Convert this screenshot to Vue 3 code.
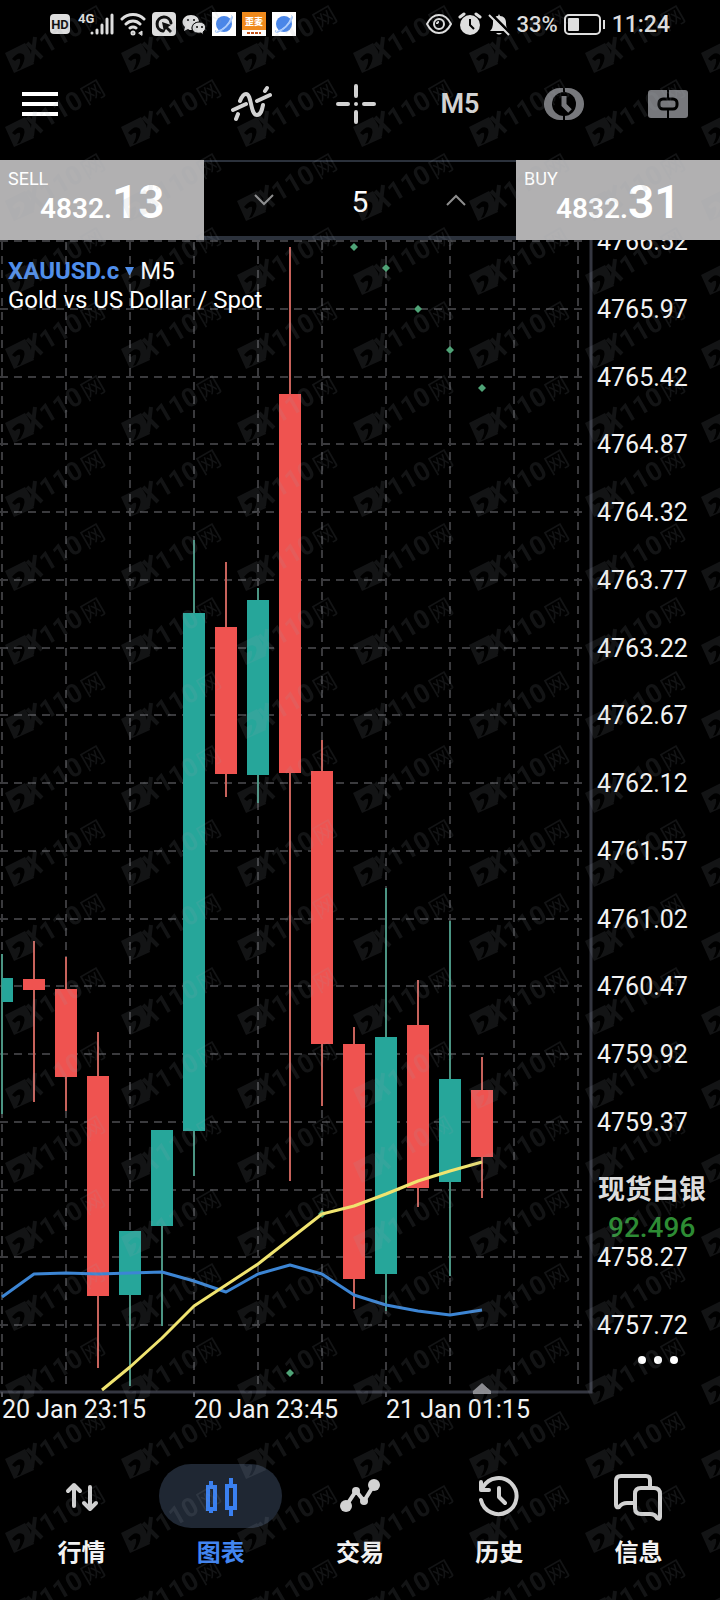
<script setup>
import { ref } from 'vue'

const volume = ref(5)
const active = ref('chart')

const tabs = [
  { id: 'quotes', label: '行情' },
  { id: 'chart', label: '图表' },
  { id: 'trade', label: '交易' },
  { id: 'history', label: '历史' },
  { id: 'messages', label: '信息' },
]

const gridX = Array.from({ length: 10 }, (_, i) => 2 + i * 64)
const gridY = Array.from({ length: 17 }, (_, i) => Math.round(241 + i * 67.75))
const prices = gridY
  .map((y, i) => ({ y, label: (4766.52 - i * 0.55).toFixed(2) }))
  .filter((_, i) => i !== 14)
const dates = [
  { x: 2, label: '20 Jan 23:15' },
  { x: 194, label: '20 Jan 23:45' },
  { x: 386, label: '21 Jan 01:15' },
]

// [centre x, high, body top, body bottom, low, rising]
const candles = [
  [2, 954, 978, 1002, 1114, true],
  [34, 941, 979, 990, 1102, false],
  [66, 957, 989, 1077, 1111, false],
  [98, 1032, 1076, 1296, 1368, false],
  [130, 1231, 1231, 1295, 1386, true],
  [162, 1130, 1130, 1226, 1326, true],
  [194, 540, 613, 1131, 1176, true],
  [226, 562, 627, 774, 797, false],
  [258, 588, 600, 775, 803, true],
  [290, 247, 394, 773, 1181, false],
  [322, 740, 771, 1044, 1106, false],
  [354, 1027, 1044, 1279, 1309, false],
  [386, 888, 1037, 1274, 1311, true],
  [418, 980, 1025, 1188, 1207, false],
  [450, 921, 1079, 1182, 1276, true],
  [482, 1057, 1090, 1157, 1198, false],
].map(([x, high, top, bottom, low, up]) => ({ x, high, top, bottom, low, up }))

const sar = [[354, 247], [386, 268], [418, 309], [450, 350], [482, 388], [322, 1214], [290, 1373]]
</script>

<template>
  <main class="app">
    <header class="status">
      <svg class="hd" width="20" height="20" viewBox="0 0 20 20">
        <rect width="20" height="20" rx="4" fill="#dedede" />
        <text x="10" y="15" text-anchor="middle" font-size="13" font-weight="700" fill="#111">HD</text>
      </svg>
      <span class="cell">
        <small>4G</small>
        <svg width="24" height="24" viewBox="0 0 24 24" stroke="#dedede" stroke-width="3" stroke-linecap="round">
          <path d="M2 21v0M7 21v-3M12 21v-8M17 21V7M22 21V3" />
        </svg>
      </span>
      <svg width="26" height="24" viewBox="0 0 26 24" fill="none" stroke="#dedede" stroke-width="3" stroke-linecap="round">
        <path d="M2 7C8 1 18 1 24 7M6 12C10 8 16 8 20 12M10 16q3-2 6 0" />
        <circle cx="13" cy="21" r="1" />
        <path d="M19 21l3-2v4z" stroke-width="1" fill="#dedede" />
      </svg>
      <svg width="24" height="24" viewBox="0 0 24 24">
        <rect width="24" height="24" rx="4" fill="#dedede" />
        <path d="M11 19a7 7 0 1 1 8-8" fill="none" stroke="#111" stroke-width="3" stroke-linecap="round" />
        <path d="M10 10l9 3-3 2 4 4-2 2-4-4-2 3z" fill="#111" />
      </svg>
      <svg width="24" height="24" viewBox="0 0 24 24">
        <path d="M9 3c5 0 8 3 8 7-5 0-8 3-7 8-2 0-3 0-4-1l-4 2 1-4c-5-4-2-12 6-12z" fill="#dedede" />
        <path d="M17 10c8 0 8 8 4 10l1 3-3-2c-6 1-9-2-9-5s3-6 7-6z" fill="#dedede" stroke="#000" stroke-width="1" />
        <g fill="#000"><circle cx="6" cy="8" r="1" /><circle cx="12" cy="8" r="1" /><circle cx="15" cy="15" r="1" /><circle cx="20" cy="15" r="1" /></g>
      </svg>
      <svg v-for="n in 3" :key="n" width="24" height="24" viewBox="0 0 24 24">
        <template v-if="n !== 2">
          <rect width="24" height="24" fill="#fff" />
          <circle cx="12" cy="12" r="8" fill="#4a86e8" />
          <path d="M5 20C11 18 17 13 20 5" fill="none" stroke="#b8d4ff" stroke-width="2" />
          <path d="M4 18C1 23 10 19 15 14s7-11 4-10" fill="none" stroke="#9fc2f7" stroke-width="1" />
        </template>
        <template v-else>
          <rect width="24" height="24" fill="#f08a1c" />
          <text x="12" y="13" text-anchor="middle" font-size="9" font-weight="900" fill="#fff">歪麦</text>
          <path d="M0 18h24v6H0z" fill="#fff" />
          <path d="M5 21h14" stroke="#c1541d" stroke-width="2" stroke-dasharray="3 1" />
        </template>
      </svg>
      <span class="spacer"></span>
      <svg width="26" height="24" viewBox="0 0 26 24" fill="none" stroke="#dedede" stroke-width="2">
        <path d="M1 12C7 0 19 0 25 12 19 24 7 24 1 12z" /><circle cx="13" cy="12" r="5" /><path d="M11 12q0-2 2-2" />
      </svg>
      <svg width="24" height="24" viewBox="0 0 24 24">
        <circle cx="12" cy="13" r="10" fill="#dedede" />
        <path d="M2 5l4-3M22 5l-4-3" stroke="#dedede" stroke-width="3" stroke-linecap="round" />
        <path d="M12 7v6l4 4" fill="none" stroke="#000" stroke-width="2" />
      </svg>
      <svg width="22" height="24" viewBox="0 0 22 24">
        <path d="M2 19q3-3 3-8c0-5 2-7 5-7l1-2 1 2c4 0 6 3 6 7s1 6 3 8zM8 21h6q-3 3-6 0" fill="#dedede" />
        <path d="M2 1l20 20" stroke="#000" stroke-width="3" /><path d="M1 3l20 20" stroke="#dedede" stroke-width="2" />
      </svg>
      <span class="pct">33%</span>
      <svg width="42" height="24" viewBox="0 0 42 24">
        <rect x="1" y="3" width="35" height="19" rx="4" fill="none" stroke="#dedede" stroke-width="2" />
        <rect x="4" y="6" width="11" height="13" rx="1" fill="#dedede" /><path d="M40 8v9" stroke="#dedede" stroke-width="2" />
      </svg>
      <time>11:24</time>
    </header>

    <nav class="toolbar" aria-label="图表工具">
      <button class="menu" aria-label="菜单">
        <svg width="36" height="26" viewBox="0 0 36 26"><path d="M0 3h36M0 13h36M0 23h36" stroke="#fff" stroke-width="4" /></svg>
      </button>
      <button aria-label="指标">
        <svg width="44" height="40" viewBox="0 0 44 40" fill="none" stroke="#d2d2d2" stroke-width="4" stroke-linecap="round" stroke-linejoin="round">
          <path d="M6 35L8 30M3 26L16 20M10 17C12 12 14 10 16 10C22 10 20 31 27 31C31 31 32 26 33 21M27 17L40 11M35 7L37 4" />
        </svg>
      </button>
      <button aria-label="十字光标">
        <svg width="40" height="40" viewBox="0 0 40 40" stroke="#d2d2d2" stroke-width="4" stroke-linecap="round">
          <path d="M2 20h10M28 20h10M20 2v10M20 28v10M20 20v0" />
        </svg>
      </button>
      <button class="period">M5</button>
      <button aria-label="时间">
        <svg width="40" height="34" viewBox="0 0 40 34">
          <rect y="1" width="40" height="32" rx="16" fill="#77787c" /><circle cx="20" cy="17" r="12" fill="#000" />
          <path d="M20 0v34" stroke="#000" stroke-width="2" /><path d="M20 9v9l6 6" fill="none" stroke="#77787c" stroke-width="5" />
        </svg>
      </button>
      <button aria-label="下单">
        <svg width="40" height="28" viewBox="0 0 40 28">
          <rect width="40" height="28" rx="3" fill="#77787c" /><path d="M20 0v28" stroke="#000" stroke-width="2" />
          <rect x="11" y="9" width="18" height="10" rx="4" fill="#77787c" stroke="#000" stroke-width="3" />
        </svg>
      </button>
    </nav>

    <section class="order-bar" aria-label="报价">
      <button class="quote"><span>SELL</span><b>4832.<i>13</i></b></button>
      <div class="volume">
        <button aria-label="减少" @click="volume = Math.max(1, volume - 1)">
          <svg width="20" height="12" viewBox="0 0 20 12"><path d="M1 1l9 9 9-9" fill="none" stroke="#8d8d8d" stroke-width="2" /></svg>
        </button>
        <input v-model.number="volume" aria-label="交易量" inputmode="numeric" />
        <button aria-label="增加" @click="volume++">
          <svg width="20" height="12" viewBox="0 0 20 12"><path d="M1 11l9-9 9 9" fill="none" stroke="#8d8d8d" stroke-width="2" /></svg>
        </button>
      </div>
      <button class="quote"><span>BUY</span><b>4832.<i>31</i></b></button>
    </section>

    <section class="chart" aria-label="XAUUSD.c M5">
      <svg class="plot" viewBox="0 240 720 1188">
        <g stroke="#3a3a3d" stroke-width="2" stroke-dasharray="8 6">
          <path v-for="x in gridX" :key="'x' + x" :d="`M${x} 242V1390`" />
          <path v-for="y in gridY" :key="'y' + y" :d="`M0 ${y}H588`" />
        </g>
        <path d="M0 1392H591V240" fill="none" stroke="#343640" stroke-width="3" />
        <path d="M2 1392v5M194 1392v5M386 1392v5" stroke="#505158" stroke-width="2" />
        <g v-for="c in candles" :key="c.x">
          <path :d="`M${c.x} ${c.high}V${c.low}`" :stroke="c.up ? '#4b9483' : '#c7625b'" stroke-width="2" />
          <rect :x="Math.max(2, c.x - 11)" :y="c.top" :width="c.x < 10 ? 11 : 22" :height="c.bottom - c.top" :fill="c.up ? '#26a69a' : '#ef5350'" />
        </g>
        <path v-for="p in sar" :key="p[0]" :d="`M${p[0]} ${p[1] - 4}l4 4-4 4-4-4z`" fill="#4fa377" />
        <g fill="none" stroke-width="3" stroke-linejoin="round">
          <path stroke="#3c85d4" d="M2 1297L34 1274L66 1273L98 1274L130 1273L162 1272L194 1281L226 1292L258 1274L290 1265L322 1274L354 1295L386 1305L418 1311L450 1315L482 1310" />
          <path stroke="#f0e470" d="M102 1390L130 1367L162 1338L194 1306L226 1285L258 1264L290 1239L322 1214L354 1206L386 1194L418 1181L450 1171L482 1162" />
        </g>
        <path d="M482 1383l9 8v3h-18v-3z" fill="#8b8b8f" />
        <g class="scale">
          <text v-for="p in prices" :key="p.label" x="597" :y="p.y + 9">{{ p.label }}</text>
          <text v-for="d in dates" :key="d.x" :x="d.x" y="1418">{{ d.label }}</text>
        </g>
      </svg>
      <div class="title">
        <p><a href="#">XAUUSD.c <svg width="9" height="8" viewBox="0 0 9 8"><path d="M0 0h9L5 8H4z" fill="#4f8eeb" /></svg></a> M5</p>
        <p>Gold vs US Dollar / Spot</p>
      </div>
      <aside class="ticker">
        <strong>现货白银</strong>
        <span>92.496</span>
      </aside>
      <button class="more" aria-label="更多"><i></i><i></i><i></i></button>
    </section>

    <nav class="tabs" aria-label="主导航">
      <button v-for="t in tabs" :key="t.id" :class="{ active: active === t.id }" @click="active = t.id">
        <span class="pill">
          <svg v-if="t.id === 'quotes'" width="48" height="48" viewBox="0 0 48 48" fill="none" stroke="currentColor" stroke-width="4" stroke-linecap="round" stroke-linejoin="round">
            <path d="M16 34V13M10 19l6-6 6 6M32 15v21M26 31l6 6 6-6" />
          </svg>
          <svg v-else-if="t.id === 'chart'" width="48" height="48" viewBox="0 0 48 48" fill="none" stroke="currentColor" stroke-width="4">
            <path d="M11 15h7v22h-7zM14 9v6M14 37v4M30 14h8v22h-8zM34 6v8M34 36v8" />
          </svg>
          <svg v-else-if="t.id === 'trade'" width="48" height="48" viewBox="0 0 48 48">
            <path d="M10 34L20 19l8 10 10-16" fill="none" stroke="currentColor" stroke-width="4" />
            <g fill="currentColor"><circle cx="10" cy="34" r="6" /><circle cx="20" cy="19" r="4" /><circle cx="28" cy="29" r="4" /><circle cx="38" cy="13" r="6" /></g>
          </svg>
          <svg v-else-if="t.id === 'history'" width="48" height="48" viewBox="0 0 48 48" fill="none" stroke="currentColor" stroke-width="4" stroke-linecap="round" stroke-linejoin="round">
            <path d="M6 28A18 18 0 1 0 8 15M6 10v8h8M24 16v9l6 6" />
          </svg>
          <svg v-else width="52" height="52" viewBox="0 0 52 52" fill="none" stroke="currentColor" stroke-width="4" stroke-linejoin="round">
            <path d="M38 16V10q0-4-4-4H9q-5 0-5 5v24q0 3 3 2 3-4 8-4h7" />
            <path d="M29 18h13q6 0 6 6v23q0 3-3 1-2-4-7-4h-9q-6 0-6-6V24q0-6 6-6z" />
          </svg>
        </span>
        <span>{{ t.label }}</span>
      </button>
    </nav>

    <svg class="mark" aria-hidden="true">
      <defs>
        <pattern id="mark" width="116" height="74" patternUnits="userSpaceOnUse">
          <g fill="#9aa2ab">
            <path fill-rule="evenodd" d="M5 53l20-10 5 8 4 13-20 9zM12 59q7-9 12-4 2 5-4 14l-3 1q4-7 3-11-2-1-5 2z" />
            <path d="M27 43l15 15M35 37l-3 25" fill="none" stroke="#9aa2ab" stroke-width="4" />
            <text transform="translate(46 54) rotate(-30)" font-size="26" font-weight="700">110</text>
            <text transform="translate(87 31) rotate(-30)" font-size="23" class="cjk">网</text>
          </g>
        </pattern>
      </defs>
      <rect width="100%" height="100%" fill="url(#mark)" />
    </svg>
  </main>
</template>

<style>
body { margin: 0; background: #000; }
</style>

<style scoped>
.app {
  position: relative;
  min-height: 100vh;
  overflow: hidden;
  display: flex;
  flex-direction: column;
  background: #000;
  color: #f2f2f2;
  font-family: Roboto, "Noto Sans CJK SC", sans-serif;
}
button {
  padding: 0;
  border: 0;
  background: none;
  color: inherit;
  font: inherit;
  cursor: pointer;
}
svg { display: block; flex-shrink: 0; }
.status {
  display: flex;
  align-items: center;
  gap: 6px;
  height: 48px;
  padding: 0 50px;
  color: #dedede;
}
.cell { display: flex; padding-left: 2px; }
.cell small {
  font-size: 13px;
  line-height: 14px;
  font-weight: 700;
  margin-right: -4px;
}
.spacer { flex: 1; }
.pct { font-size: 22px; font-weight: 500; }
.status time { font-size: 23px; font-weight: 500; }
.toolbar {
  display: grid;
  grid-template-columns: 200fr repeat(5, 104fr);
  height: 112px;
}
.toolbar button { display: grid; place-items: center; }
.toolbar .menu { justify-content: start; padding-left: 22px; }
.toolbar .period {
  color: #d2d2d2;
  font-size: 27px;
  font-weight: 600;
}
.order-bar {
  display: grid;
  grid-template-columns: 204fr 312fr 204fr;
  height: 80px;
}
.quote {
  display: flex;
  flex-direction: column;
  padding: 8px 8px 0;
  background: #b1b0b1;
  color: #fff;
  text-align: left;
}
.quote span { font-size: 18px; line-height: 22px; }
.quote b { margin: -14px 0 0 32px; font-size: 28px; line-height: 52px; font-weight: 600; }
.quote i { font-size: 46px; font-style: normal; }
.volume {
  display: grid;
  grid-template-columns: 120px 1fr 120px;
  box-sizing: border-box;
  padding-top: 2px;
  border-top: 2px solid #2b313b;
  border-bottom: 4px solid #2b313b;
}
.volume button { display: grid; place-items: center; }
.volume input {
  width: 100%;
  min-width: 0;
  padding: 2px 0 0;
  border: 0;
  background: none;
  color: #fff;
  font: 30px Roboto, sans-serif;
  text-align: center;
}
.chart { position: relative; }
.plot { width: 100%; height: auto; }
.scale { fill: #f2f2f2; font-size: 25px; }
.title {
  position: absolute;
  top: 17px;
  left: 8px;
  font-size: 24px;
  line-height: 29px;
  color: #fff;
}
.title p { margin: 0; }
.title a { color: #4f8eeb; font-weight: 700; text-decoration: none; }
.title svg { display: inline-block; vertical-align: 4px; }
.ticker {
  position: absolute;
  right: 10px;
  bottom: 182px;
  width: 112px;
  display: flex;
  flex-direction: column;
  background: #000;
}
.ticker strong { font-size: 27px; line-height: 40px; font-weight: 700; color: #dcdcdc; }
.ticker span { padding-left: 10px; font-size: 28px; line-height: 36px; font-weight: 500; color: #2d8c34; }
.more {
  position: absolute;
  right: 42px;
  bottom: 60px;
  display: flex;
  gap: 8px;
  padding: 4px 0;
}
.more i { width: 8px; height: 8px; border-radius: 50%; background: #fff; }
.tabs {
  display: grid;
  grid-template-columns: repeat(5, 1fr);
  padding: 36px 12px 0;
}
.tabs button {
  display: flex;
  flex-direction: column;
  align-items: center;
  font-size: 24px;
  line-height: 28px;
  font-weight: 700;
  gap: 11px;
}
.pill {
  display: grid;
  place-items: center;
  width: 123px;
  height: 64px;
  border-radius: 32px;
  color: #d2d2d2;
}
.tabs .active { color: #4285f0; }
.active .pill { background: #1f2733; color: #3a80f0; }
.mark {
  position: absolute;
  inset: 0;
  width: 100%;
  height: 100%;
  opacity: 0.12;
  pointer-events: none;
}
.cjk { font-family: "Noto Sans CJK SC", sans-serif; }
</style>
